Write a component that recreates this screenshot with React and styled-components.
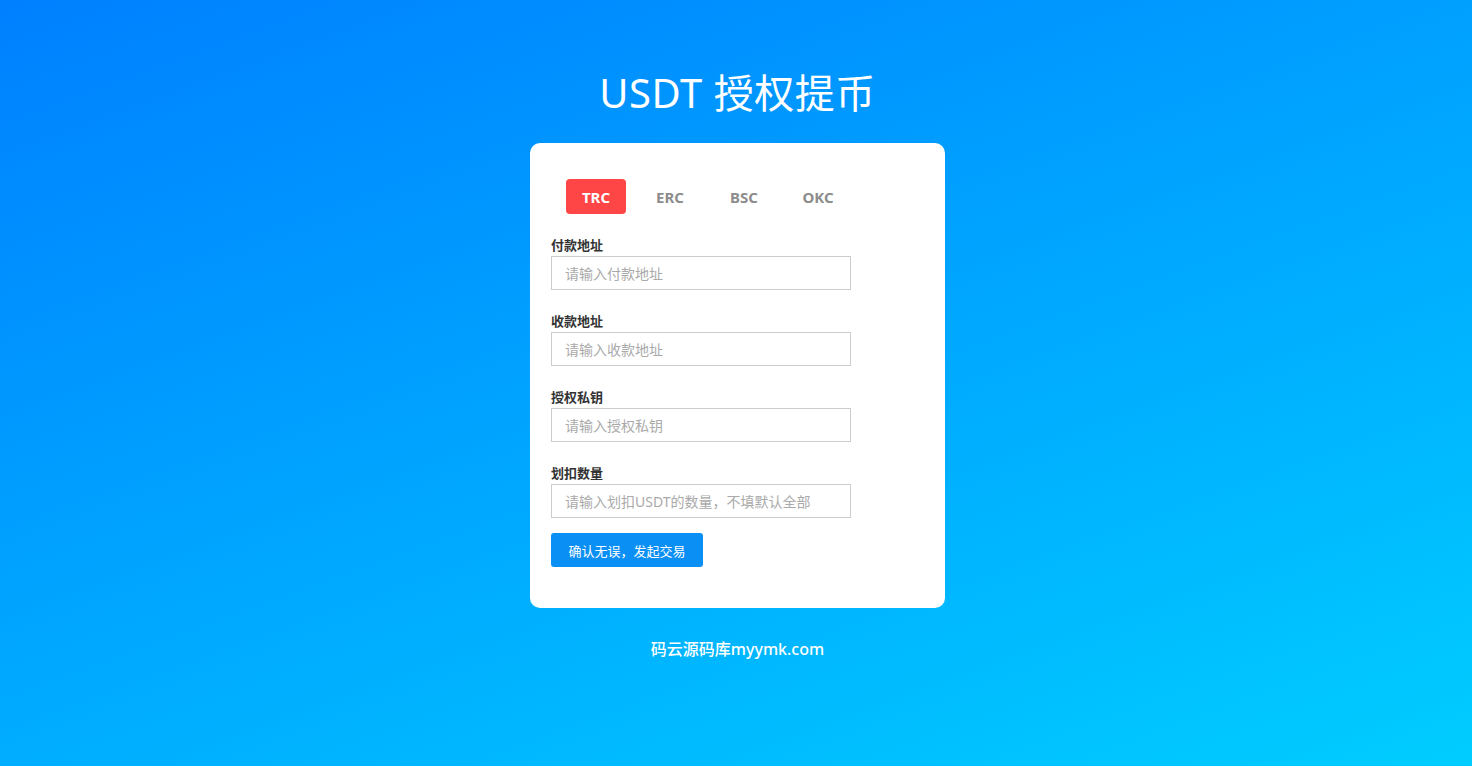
import React, { useState } from "react";
import styled, { createGlobalStyle } from "styled-components";

const GlobalStyle = createGlobalStyle`
  html, body {
    margin: 0;
    padding: 0;
    height: 100%;
  }
  body {
    font-family: "Noto Sans", "Noto Sans CJK SC", sans-serif;
  }
  * {
    box-sizing: border-box;
  }
`;

const Page = styled.div`
  min-height: 766px;
  background: linear-gradient(160deg, #0080ff 0%, #00cdff 100%);
  display: flex;
  flex-direction: column;
  align-items: center;
  padding: 65px 0 0 3px;
`;

const Title = styled.h1`
  margin: 0;
  font-size: 40px;
  line-height: 56px;
  font-weight: 400;
  color: #ffffff;
  letter-spacing: 0.5px;
`;

const Card = styled.div`
  margin-top: 22px;
  width: 415px;
  background: #ffffff;
  border-radius: 10px;
  padding: 36px 21px 41px;
`;

const Tabs = styled.div`
  display: flex;
  gap: 14px;
  padding-left: 15px;
  margin-bottom: 23px;
`;

const Tab = styled.div`
  width: 60px;
  height: 35px;
  display: flex;
  align-items: center;
  justify-content: center;
  border-radius: 4px;
  font-size: 15px;
  font-weight: 700;
  cursor: pointer;
  color: ${(p) => (p.$active ? "#ffffff" : "#8c8c8c")};
  background: ${(p) => (p.$active ? "#ff4646" : "transparent")};
`;

const Field = styled.div`
  margin-bottom: 23px;
  &:last-of-type {
    margin-bottom: 15px;
  }
`;

const Label = styled.label`
  display: block;
  font-size: 13px;
  line-height: 17px;
  font-weight: 700;
  color: #333333;
  margin-bottom: 2px;
`;

const Input = styled.input`
  display: block;
  width: 300px;
  height: 34px;
  border: 1px solid #cccccc;
  padding: 0 13px;
  font-family: inherit;
  font-size: 14px;
  color: #333;
  outline: none;
  &::placeholder {
    color: #aaaaaa;
  }
`;

const Button = styled.button`
  width: 152px;
  height: 34px;
  border: none;
  border-radius: 3px;
  background: #0a8ff5;
  color: #ffffff;
  font-family: inherit;
  font-size: 13px;
  cursor: pointer;
`;

const Footer = styled.div`
  margin-top: 30px;
  font-size: 16px;
  line-height: 22px;
  font-weight: 500;
  color: #ffffff;
`;

const chains = ["TRC", "ERC", "BSC", "OKC"];

const fields = [
  { label: "付款地址", placeholder: "请输入付款地址" },
  { label: "收款地址", placeholder: "请输入收款地址" },
  { label: "授权私钥", placeholder: "请输入授权私钥" },
  { label: "划扣数量", placeholder: "请输入划扣USDT的数量，不填默认全部" },
];

export default function App() {
  const [chain, setChain] = useState("TRC");

  return (
    <>
      <GlobalStyle />
      <Page>
        <Title>USDT 授权提币</Title>
        <Card>
          <Tabs>
            {chains.map((c) => (
              <Tab key={c} $active={c === chain} onClick={() => setChain(c)}>
                {c}
              </Tab>
            ))}
          </Tabs>
          {fields.map((f) => (
            <Field key={f.label}>
              <Label>{f.label}</Label>
              <Input placeholder={f.placeholder} />
            </Field>
          ))}
          <Button>确认无误，发起交易</Button>
        </Card>
        <Footer>码云源码库myymk.com</Footer>
      </Page>
    </>
  );
}
